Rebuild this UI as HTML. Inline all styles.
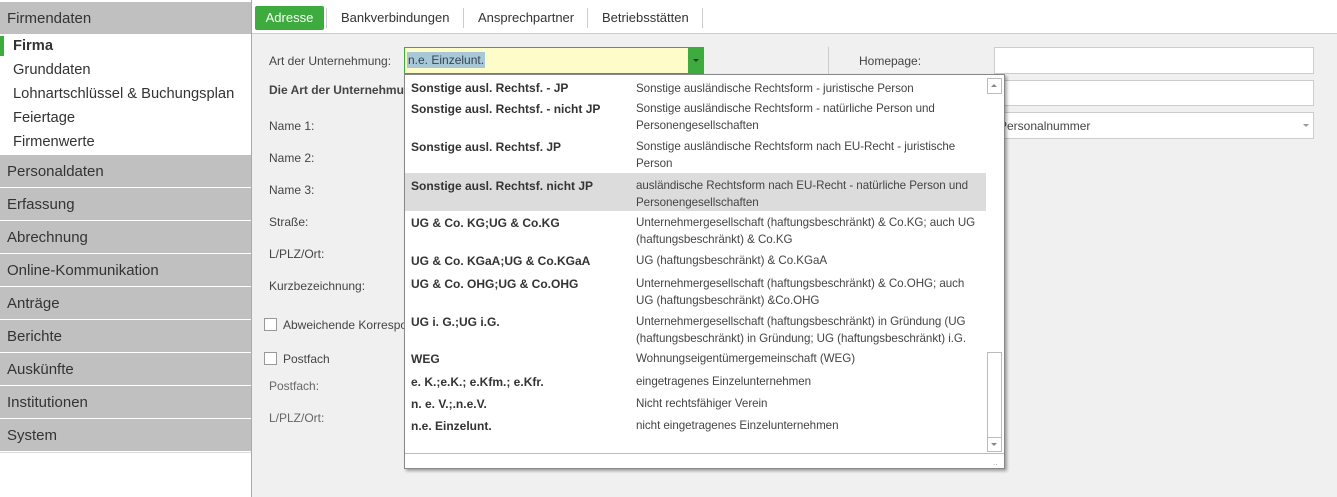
<!DOCTYPE html><html><head><style>
*{box-sizing:border-box;margin:0;padding:0}
body{width:1337px;height:497px;overflow:hidden;background:#f0f0f0;font-family:"Liberation Sans",sans-serif;position:relative;color:#333}
.a{position:absolute;white-space:nowrap}
#side{position:absolute;left:0;top:0;width:252px;height:497px;background:#fff;border-right:1px solid #a9a9a9}
.h{position:absolute;left:0;width:251px;height:32px;background:#c0c0c0;font-size:15px;color:#333;padding:8px 0 0 7px}
.it{position:absolute;left:13px;font-size:14.7px;color:#333}
.lab{position:absolute;font-size:12px;color:#444;white-space:nowrap}
.inp{position:absolute;background:#fff;border:1px solid #ccc}
.c1{position:absolute;left:6px;font-size:12px;font-weight:bold;color:#333;white-space:nowrap}
.c2{position:absolute;left:231px;font-size:11.6px;letter-spacing:-0.05px;color:#444;line-height:17px;white-space:nowrap}
.cb{position:absolute;width:13px;height:13px;border:1px solid #999;background:#fff}
</style></head><body>
<div id="side">
<div style="position:absolute;top:0;left:0;width:251px;height:2px;background:#fff"></div>
<div class="h" style="top:2px">Firmendaten</div>
<div style="position:absolute;left:0;top:36px;width:4px;height:20px;background:#3dab3d"></div>
<div class="it" style="top:38px;font-weight:bold">Firma</div>
<div class="it" style="top:62px">Grunddaten</div>
<div class="it" style="top:86px">Lohnartschlüssel &amp; Buchungsplan</div>
<div class="it" style="top:110px">Feiertage</div>
<div class="it" style="top:134px">Firmenwerte</div>
<div class="h" style="top:155px">Personaldaten</div>
<div class="h" style="top:188px">Erfassung</div>
<div class="h" style="top:221px">Abrechnung</div>
<div class="h" style="top:254px">Online-Kommunikation</div>
<div class="h" style="top:287px">Anträge</div>
<div class="h" style="top:320px">Berichte</div>
<div class="h" style="top:353px">Auskünfte</div>
<div class="h" style="top:386px">Institutionen</div>
<div class="h" style="top:419px">System</div>
<div style="position:absolute;top:452px;left:0;width:251px;height:1px;background:#ddd"></div>
</div>
<div class="a" style="left:252px;top:0;width:1085px;height:34px;background:#fff;border-bottom:1px solid #ccc"></div>
<div class="a" style="left:255px;top:6px;width:69px;height:24px;background:#3dab3d;border-radius:2px;color:#fff;font-size:13px;text-align:center;line-height:24px">Adresse</div>
<div class="a" style="left:326px;top:8px;width:1px;height:20px;background:#ccc"></div>
<div class="a" style="left:341px;top:10px;font-size:13px">Bankverbindungen</div>
<div class="a" style="left:463px;top:8px;width:1px;height:20px;background:#ccc"></div>
<div class="a" style="left:478px;top:10px;font-size:13px">Ansprechpartner</div>
<div class="a" style="left:587px;top:8px;width:1px;height:20px;background:#ccc"></div>
<div class="a" style="left:602px;top:10px;font-size:13px">Betriebsstätten</div>
<div class="a" style="left:702px;top:8px;width:1px;height:20px;background:#ccc"></div>

<div class="lab" style="left:269px;top:54px">Art der Unternehmung:</div>
<div class="lab" style="left:269px;top:83px;font-weight:bold">Die Art der Unternehmu</div>
<div class="lab" style="left:269px;top:119px">Name 1:</div>
<div class="lab" style="left:269px;top:151px">Name 2:</div>
<div class="lab" style="left:269px;top:183px">Name 3:</div>
<div class="lab" style="left:269px;top:215px">Straße:</div>
<div class="lab" style="left:269px;top:247px">L/PLZ/Ort:</div>
<div class="lab" style="left:269px;top:279px">Kurzbezeichnung:</div>
<div class="cb" style="left:264px;top:318px"></div>
<div class="lab" style="left:283px;top:318px">Abweichende Korrespo</div>
<div class="cb" style="left:264px;top:352px"></div>
<div class="lab" style="left:283px;top:352px">Postfach</div>
<div class="lab" style="left:269px;top:379px;color:#666">Postfach:</div>
<div class="lab" style="left:269px;top:411px;color:#666">L/PLZ/Ort:</div>

<div class="a" style="left:404px;top:47px;width:300px;height:27px;background:#fefcc8;border:1px solid #3dab3d"></div>
<div class="a" style="left:407px;top:52px;height:16px;background:#a8c8d8;font-size:12px;line-height:16px;padding:0 1px;color:#345">n.e. Einzelunt.</div>
<div class="a" style="left:688px;top:47px;width:16px;height:27px;background:#3dab3d"></div>
<div class="a" style="left:693px;top:59px;border-left:3px solid transparent;border-right:3px solid transparent;border-top:3px solid #333"></div>

<div class="a" style="left:828px;top:47px;width:1px;height:28px;background:#ccc"></div>
<div class="lab" style="left:859px;top:54px">Homepage:</div>
<div class="inp" style="left:994px;top:47px;width:320px;height:27px"></div>
<div class="inp" style="left:994px;top:80px;width:320px;height:26px"></div>
<div class="inp" style="left:994px;top:112px;width:320px;height:27px"></div>
<div class="lab" style="left:999px;top:119px">Personalnummer</div>
<div class="a" style="left:1303px;top:124px;border-left:3px solid transparent;border-right:3px solid transparent;border-top:3px solid #999"></div>

<div class="a" style="left:404px;top:74px;width:601px;height:395px;background:#fff;border:1px solid #888;box-shadow:2px 2px 3px rgba(0,0,0,.35)">
<div class="a" style="left:0;top:98px;width:581px;height:38px;background:#dcdcdc"></div>
<div class="c1" style="top:6px">Sonstige ausl. Rechtsf. - JP</div><div class="c2" style="top:5px">Sonstige ausländische Rechtsform - juristische Person</div>
<div class="c1" style="top:27px">Sonstige ausl. Rechtsf. - nicht JP</div><div class="c2" style="top:25px">Sonstige ausländische Rechtsform - natürliche Person und<br>Personengesellschaften</div>
<div class="c1" style="top:65px">Sonstige ausl. Rechtsf. JP</div><div class="c2" style="top:63px">Sonstige ausländische Rechtsform nach EU-Recht - juristische<br>Person</div>
<div class="c1" style="top:104px">Sonstige ausl. Rechtsf. nicht JP</div><div class="c2" style="top:102px">ausländische Rechtsform nach EU-Recht - natürliche Person und<br>Personengesellschaften</div>
<div class="c1" style="top:141px">UG &amp; Co. KG;UG &amp; Co.KG</div><div class="c2" style="top:139px">Unternehmergesellschaft (haftungsbeschränkt) &amp; Co.KG; auch UG<br>(haftungsbeschränkt) &amp; Co.KG</div>
<div class="c1" style="top:179px">UG &amp; Co. KGaA;UG &amp; Co.KGaA</div><div class="c2" style="top:177px">UG (haftungsbeschränkt) &amp; Co.KGaA</div>
<div class="c1" style="top:202px">UG &amp; Co. OHG;UG &amp; Co.OHG</div><div class="c2" style="top:200px">Unternehmergesellschaft (haftungsbeschränkt) &amp; Co.OHG; auch<br>UG (haftungsbeschränkt) &amp;Co.OHG</div>
<div class="c1" style="top:240px">UG i. G.;UG i.G.</div><div class="c2" style="top:238px">Unternehmergesellschaft (haftungsbeschränkt) in Gründung (UG<br>(haftungsbeschränkt) in Gründung; UG (haftungsbeschränkt) i.G.</div>
<div class="c1" style="top:277px">WEG</div><div class="c2" style="top:275px">Wohnungseigentümergemeinschaft (WEG)</div>
<div class="c1" style="top:300px">e. K.;e.K.; e.Kfm.; e.Kfr.</div><div class="c2" style="top:298px">eingetragenes Einzelunternehmen</div>
<div class="c1" style="top:322px">n. e. V.;.n.e.V.</div><div class="c2" style="top:320px">Nicht rechtsfähiger Verein</div>
<div class="c1" style="top:344px">n.e. Einzelunt.</div><div class="c2" style="top:342px">nicht eingetragenes Einzelunternehmen</div>
<div class="a" style="left:581px;top:0;width:18px;height:378px;background:#fff"></div>
<div class="a" style="left:582px;top:3px;width:15px;height:16px;border:1px solid #bbb"></div>
<div class="a" style="left:586px;top:9px;border-left:3px solid transparent;border-right:3px solid transparent;border-bottom:3px solid #888"></div>
<div class="a" style="left:582px;top:277px;width:15px;height:86px;border:1px solid #bbb"></div>
<div class="a" style="left:582px;top:362px;width:15px;height:15px;border:1px solid #bbb"></div>
<div class="a" style="left:586px;top:368px;border-left:3px solid transparent;border-right:3px solid transparent;border-top:3px solid #888"></div>
<div class="a" style="left:0;top:378px;width:599px;height:1px;background:#bbb"></div>
<div class="a" style="left:588px;top:383px;font-size:8px;color:#999">..</div>
</div>
</body></html>
